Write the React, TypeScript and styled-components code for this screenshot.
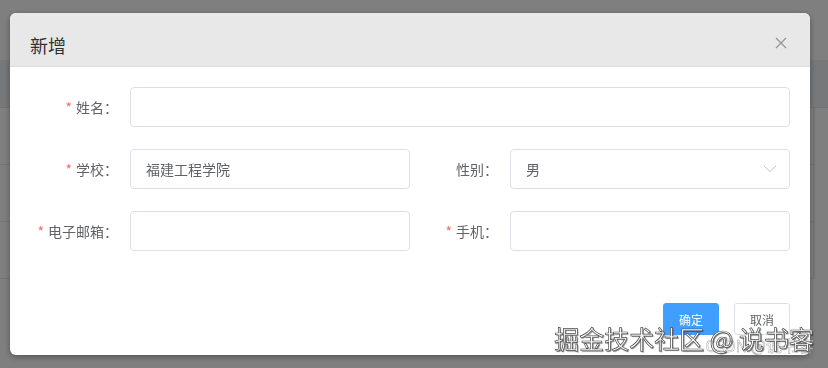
import styled, { createGlobalStyle } from "styled-components";

const GlobalStyle = createGlobalStyle`
  html, body {
    margin: 0;
    padding: 0;
    background: #fff;
    font-family: "Noto Sans CJK SC", "Noto Sans", "Liberation Sans", sans-serif;
  }
  * { box-sizing: border-box; }
`;

const Page = styled.div`
  height: 368px;
  padding-top: 60px;
  background: #fff;
`;

const TableHead = styled.div`
  height: 48px;
  background: #eef0f2;
  border-bottom: 1px solid #e2e4e8;
`;

const TableRow = styled.div`
  width: 815px;
  height: 57px;
  border-bottom: 1px solid #e6e8eb;
  border-right: 2px solid #e6e8eb;
`;

const Mask = styled.div`
  position: fixed;
  inset: 0;
  background: rgba(0, 0, 0, 0.5);
`;

const Layer = styled.div`
  position: fixed;
  inset: 0;
`;

const Dialog = styled.div`
  width: 800px;
  margin: 13px 0 0 10px;
  background: #fff;
  border-radius: 6px;
  overflow: hidden;
  box-shadow: 0 2px 6px rgba(0, 0, 0, 0.35);
  color: #606266;
`;

const Header = styled.div`
  position: relative;
  height: 54px;
  padding: 20px 20px 10px;
  background: #e8e8e8;
  border-bottom: 1px solid #dedede;
`;

const Title = styled.span`
  display: block;
  font-size: 18px;
  line-height: 24px;
  color: #303133;
`;

const Close = styled.button`
  position: absolute;
  top: 22px;
  right: 21px;
  width: 16px;
  height: 16px;
  padding: 0;
  border: none;
  background: none;
  display: flex;
  align-items: center;
  justify-content: center;
`;

const Body = styled.div`
  padding: 20px;
  display: flex;
  flex-direction: column;
`;

const Row = styled.div`
  display: flex;
  margin-bottom: 22px;
`;

const Item = styled.div<{ $span?: number }>`
  flex: ${(p) => p.$span ?? 1};
  display: flex;
  align-items: center;
`;

const Label = styled.label`
  width: 100px;
  flex: none;
  padding-right: 12px;
  text-align: right;
  font-size: 14px;
  line-height: 40px;
  color: #606266;
`;

const Star = styled.span`
  color: #f56c6c;
  margin-right: 4px;
`;

const Input = styled.input`
  flex: 1;
  min-width: 0;
  height: 40px;
  padding: 0 15px;
  border: 1px solid #dcdfe6;
  border-radius: 4px;
  font-family: inherit;
  font-size: 14px;
  color: #606266;
  outline: none;
`;

const Select = styled.div`
  flex: 1;
  height: 40px;
  padding: 0 12px 0 15px;
  border: 1px solid #dcdfe6;
  border-radius: 4px;
  display: flex;
  align-items: center;
  justify-content: space-between;
  font-size: 14px;
  color: #606266;
`;

const Footer = styled.div`
  padding: 10px 20px 20px;
  display: flex;
  justify-content: flex-end;
  gap: 15px;
`;

const Button = styled.button<{ $primary?: boolean }>`
  height: 32px;
  padding: 0 15px;
  border-radius: 3px;
  font-family: inherit;
  font-size: 12px;
  border: 1px solid ${(p) => (p.$primary ? "#409eff" : "#dcdfe6")};
  background: ${(p) => (p.$primary ? "#409eff" : "#fff")};
  color: ${(p) => (p.$primary ? "#fff" : "#606266")};
`;

const Watermark = styled.div`
  position: fixed;
  right: 14px;
  top: 320px;
  width: 262px;
  height: 40px;
`;

const WaterMain = styled.div`
  position: absolute;
  right: 0;
  top: 0;
  white-space: nowrap;
  font-size: 25px;
  line-height: 36px;
  color: #fff;
  -webkit-text-stroke: 0.7px #4a4a4a;
  text-shadow: 1px 1px 1px rgba(0, 0, 0, 0.5);
`;

const WaterSub = styled.div`
  position: absolute;
  right: 0;
  top: 14px;
  white-space: nowrap;
  font-size: 16px;
  line-height: 22px;
  color: rgba(255, 255, 255, 0.5);
  -webkit-text-stroke: 0.4px rgba(80, 80, 80, 0.6);
`;

const App = () => {
  return (
    <>
      <GlobalStyle />
      <Page>
        <TableHead />
        <TableRow />
        <TableRow />
        <TableRow />
      </Page>
      <Mask />
      <Layer>
        <Dialog>
          <Header>
            <Title>新增</Title>
            <Close aria-label="关闭">
              <svg width="12" height="12" viewBox="0 0 12 12">
                <path d="M1 1L11 11M11 1L1 11" stroke="#909399" strokeWidth="1.2" fill="none" />
              </svg>
            </Close>
          </Header>
          <Body>
            <Row>
              <Item $span={2}>
                <Label><Star>*</Star>姓名：</Label>
                <Input />
              </Item>
            </Row>
            <Row>
              <Item>
                <Label><Star>*</Star>学校：</Label>
                <Input defaultValue="福建工程学院" />
              </Item>
              <Item>
                <Label>性别：</Label>
                <Select>
                  <span>男</span>
                  <svg width="14" height="8" viewBox="0 0 14 8">
                    <polyline points="1,1 7,6.5 13,1" stroke="#c0c4cc" strokeWidth="1" fill="none" />
                  </svg>
                </Select>
              </Item>
            </Row>
            <Row>
              <Item>
                <Label><Star>*</Star>电子邮箱：</Label>
                <Input />
              </Item>
              <Item>
                <Label><Star>*</Star>手机：</Label>
                <Input />
              </Item>
            </Row>
          </Body>
          <Footer>
            <Button $primary>确定</Button>
            <Button>取消</Button>
          </Footer>
        </Dialog>
      </Layer>
      <Watermark>
        <WaterSub>CSDN @说书客</WaterSub>
        <WaterMain>掘金技术社区 @ 说书客</WaterMain>
      </Watermark>
    </>
  );
};

export default App;
